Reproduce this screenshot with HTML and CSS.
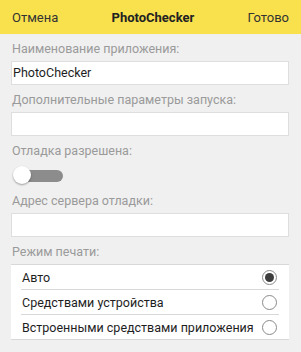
FILE: index.html
```html
<!DOCTYPE html>
<html lang="ru">
<head>
<meta charset="utf-8">
<title>PhotoChecker</title>
<link rel="stylesheet" href="styles.css">
</head>
<body>
<div class="screen">
  <header class="bar">
    <span class="bar-btn">Отмена</span>
    <span class="bar-title">PhotoChecker</span>
    <span class="bar-btn">Готово</span>
  </header>
  <main class="form">
    <div class="label">Наименование приложения:</div>
    <div class="input">PhotoChecker</div>
    <div class="label">Дополнительные параметры запуска:</div>
    <div class="input"></div>
    <div class="label">Отладка разрешена:</div>
    <div class="toggle-row">
      <div class="toggle"><div class="knob"></div></div>
    </div>
    <div class="label">Адрес сервера отладки:</div>
    <div class="input"></div>
    <div class="label">Режим печати:</div>
    <div class="list">
      <div class="row"><span>Авто</span><span class="radio on"></span></div>
      <div class="row"><span>Средствами устройства</span><span class="radio"></span></div>
      <div class="row"><span>Встроенными средствами приложения</span><span class="radio"></span></div>
    </div>
  </main>
</div>
</body>
</html>
```
FILE: styles.css
```css
html, body {
  margin: 0;
  padding: 0;
  background: #f0f0f0;
}
body {
  font-family: Roboto, "Liberation Sans", sans-serif;
  color: #222;
}
.screen {
  width: 301px;
  height: 352px;
  overflow: hidden;
}
.bar {
  height: 34px;
  background: #f9e14d;
  display: flex;
  align-items: center;
  justify-content: space-between;
  padding: 0 12px;
  font-size: 13px;
  color: #333;
}
.bar-title {
  font-weight: bold;
  color: #222;
}
.form {
  padding: 0 12px 0 11px;
}
.label {
  padding-top: 7px;
  height: 16px;
  line-height: 16px;
  margin-bottom: 4px;
  padding-left: 1px;
  font-size: 12.5px;
  color: #9a9a9a;
}
.input {
  height: 22px;
  line-height: 22px;
  background: #fff;
  border: 1px solid #dedede;
  padding: 0 1px;
  font-size: 12.5px;
  color: #1e1e1e;
}
.toggle-row {
  height: 23px;
  display: flex;
  align-items: center;
  padding-top: 2px;
  box-sizing: border-box;
}
.toggle {
  position: relative;
  width: 49px;
  height: 12px;
  margin-left: 3px;
  border-radius: 6px;
  background: #8c8c8c;
}
.knob {
  position: absolute;
  left: -1px;
  top: -4px;
  width: 18px;
  height: 18px;
  border-radius: 50%;
  background: #fff;
  box-shadow: 0 1px 2px rgba(0,0,0,0.35);
}
.list {
  background: #fff;
  border-top: 1px solid #d8d8d8;
  border-bottom: 1px solid #d8d8d8;
}
.row {
  height: 24px;
  margin: 0 10px;
  display: flex;
  align-items: center;
  justify-content: space-between;
  font-size: 12.5px;
  color: #1e1e1e;
  border-bottom: 1px solid #d8d8d8;
  padding-left: 1px;
}
.row:last-child {
  border-bottom: none;
}
.radio {
  flex: none;
  width: 15px;
  height: 15px;
  border: 1px solid #8a8a8a;
  border-radius: 50%;
  box-sizing: border-box;
  display: flex;
  align-items: center;
  justify-content: center;
  margin-right: 2px;
}
.radio.on::after {
  content: "";
  width: 9px;
  height: 9px;
  border-radius: 50%;
  background: #3d3d3d;
}
```
